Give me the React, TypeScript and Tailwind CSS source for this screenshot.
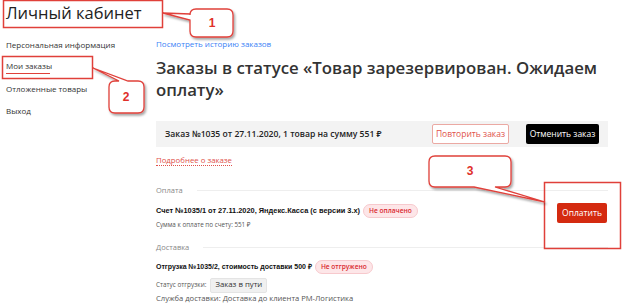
import React from "react";

const red = "#e0403a";

function Overlay() {
  return (
    <svg className="absolute inset-0 pointer-events-none" width="623" height="306" viewBox="0 0 623 306">
      <defs>
        <filter id="sh" x="-20%" y="-20%" width="150%" height="160%">
          <feDropShadow dx="1.5" dy="2" stdDeviation="1.2" floodColor="#000" floodOpacity="0.35" />
        </filter>
      </defs>
      <rect x="3.5" y="0.5" width="159" height="27" fill="none" stroke={red} strokeWidth="1.5" />
      <rect x="2.5" y="56.5" width="90" height="22" fill="none" stroke={red} strokeWidth="1.5" />
      <rect x="544.5" y="182.5" width="76" height="66" fill="none" stroke={red} strokeWidth="1.5" />
      <path
        d="M196 9 H227 Q233 9 233 15 V31 Q233 37 227 37 H196 Q190 37 190 31 V20 L163 13 L190 14 V15 Q190 9 196 9 Z"
        fill="#fff" stroke={red} strokeWidth="1.3" filter="url(#sh)"
      />
      <path
        d="M115 81 H119 L93 68 L128 81 H138 Q144 81 144 87 V107 Q144 113 138 113 H115 Q109 113 109 107 V87 Q109 81 115 81 Z"
        fill="#fff" stroke={red} strokeWidth="1.3" filter="url(#sh)"
      />
      <path
        d="M435 156 H505 Q511 156 511 162 V181 Q511 187 505 187 H495 L545 202 L474 187 H435 Q429 187 429 181 V162 Q429 156 435 156 Z"
        fill="#fff" stroke={red} strokeWidth="1.3" filter="url(#sh)"
      />
      <text x="212" y="27" textAnchor="middle" fontSize="12" fontWeight="700" fill="#e0302a" fontFamily="Liberation Sans, sans-serif">1</text>
      <text x="126" y="101" textAnchor="middle" fontSize="12" fontWeight="700" fill="#e0302a" fontFamily="Liberation Sans, sans-serif">2</text>
      <text x="470" y="175" textAnchor="middle" fontSize="12" fontWeight="700" fill="#e0302a" fontFamily="Liberation Sans, sans-serif">3</text>
    </svg>
  );
}

const arial = { fontFamily: '"Liberation Sans", Arial, sans-serif' };

export default function App() {
  return (
    <div className="relative w-[623px] h-[306px] overflow-hidden bg-white text-[#333]" style={{ fontFamily: '"Open Sans", "Noto Sans", sans-serif' }}>
      <div className="pl-[6px] pt-[1px] h-[34px]">
        <h1 className="text-[16.5px] leading-[24px] font-medium text-[#222]">Личный кабинет</h1>
      </div>
      <div className="flex">
        <nav className="w-[156px] shrink-0 pl-[6px] flex flex-col text-[8px] leading-[12px] text-[#333]">
          <a className="h-[22px] flex items-center">Персональная информация</a>
          <a className="h-[22px] flex flex-col justify-center">
            <span>Мои заказы</span>
            <span className="block w-[44px] h-[1px] bg-[#e0403a] mt-[1px]"></span>
          </a>
          <a className="h-[22px] flex items-center">Отложенные товары</a>
          <a className="h-[22px] flex items-center">Выход</a>
        </nav>
        <main className="w-[452px] flex flex-col">
          <a className="h-[12px] mt-[4px] text-[8px] leading-[12px] text-[#3b82f6]">Посмотреть историю заказов</a>
          <h2 className="mt-[7px] text-[16.8px] leading-[22px] font-semibold text-[#333]">
            Заказы в статусе «Товар зарезервирован. Ожидаем оплату»
          </h2>
          <div className="mt-[20px] h-[26px] bg-[#f3f3f3] flex items-center pl-[9px] pr-[9px]">
            <span className="flex-1 text-[8.6px] font-semibold text-[#222]">Заказ №1035 от 27.11.2020, 1 товар на сумму 551 ₽</span>
            <button className="h-[20px] w-[77px] border border-[#eba9a3] bg-white text-[#e0504a] text-[8.5px] rounded-[2px]">Повторить заказ</button>
            <button className="ml-[17px] h-[20px] w-[73px] bg-black text-white text-[8.5px] rounded-[2px]">Отменить заказ</button>
          </div>
          <div className="mt-[4px] h-[12px] leading-[12px]">
            <a className="text-[7.8px] leading-[12px] text-[#e0504a] border-b border-dotted border-[#e0504a]">Подробнее о заказе</a>
          </div>
          <div className="mt-[22px] h-[10px] flex items-center">
            <span className="text-[7.5px] leading-[10px] text-[#888]">Оплата</span>
            <span className="ml-[14px] flex-1 h-[1px] bg-[#eeeeee]"></span>
          </div>
          <div className="relative mt-[9px] h-[37px]">
            <div className="flex items-center h-[14px]">
              <span className="text-[7.4px] font-bold text-[#111]" style={arial}>Счет №1035/1 от 27.11.2020, Яндекс.Касса (с версии 3.х)</span>
              <span className="ml-[3px] px-[5px] h-[14px] flex items-center rounded-full bg-[#fde6e8] border border-[#f7c9cd] text-[6.6px] font-semibold text-[#d9262e]">Не оплачено</span>
            </div>
            <div className="text-[6.3px] leading-[10px] text-[#555] mt-[2px]">Сумма к оплате по счету: 551 ₽</div>
            <button className="absolute right-[1px] top-[-1px] h-[20px] w-[50px] bg-[#d42a10] text-white text-[8.5px] rounded-[2px]">Оплатить</button>
          </div>
          <div className="mt-[1px] h-[10px] flex items-center">
            <span className="text-[7.5px] leading-[10px] text-[#888]">Доставка</span>
            <span className="ml-[14px] flex-1 h-[1px] bg-[#eeeeee]"></span>
          </div>
          <div className="flex items-center h-[14px] mt-[8px]">
            <span className="text-[7px] font-bold text-[#111]" style={arial}>Отгрузка №1035/2, стоимость доставки 500 ₽</span>
            <span className="ml-[3px] px-[5px] h-[14px] flex items-center rounded-full bg-[#fde6e8] border border-[#f7c9cd] text-[6.6px] font-semibold text-[#d9262e]">Не отгружено</span>
          </div>
          <div className="flex items-center mt-[3px] h-[16px]">
            <span className="text-[6.4px] text-[#555]">Статус отгрузки:</span>
            <span className="ml-[4px] px-[4px] h-[15px] flex items-center bg-[#f0f0f0] border border-[#e4e4e4] rounded-[2px] text-[7.8px] text-[#333]">Заказ в пути</span>
          </div>
          <div className="text-[7.6px] leading-[10px] text-[#555] mt-[0px]">Служба доставки: Доставка до клиента РМ-Логистика</div>
        </main>
      </div>
      <Overlay />
    </div>
  );
}
